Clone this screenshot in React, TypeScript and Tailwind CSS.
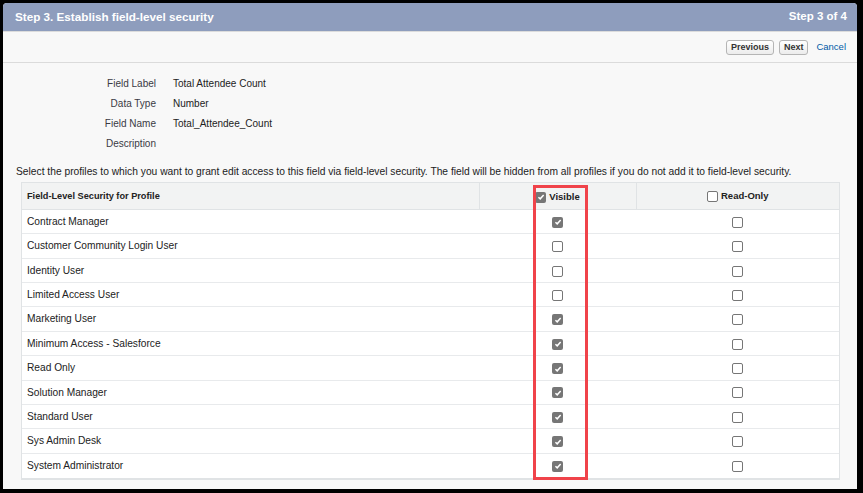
import React from 'react'

const font = { fontFamily: '"Liberation Sans", Arial, sans-serif' }

const profiles: { name: string; visible: boolean }[] = [
  { name: 'Contract Manager', visible: true },
  { name: 'Customer Community Login User', visible: false },
  { name: 'Identity User', visible: false },
  { name: 'Limited Access User', visible: false },
  { name: 'Marketing User', visible: true },
  { name: 'Minimum Access - Salesforce', visible: true },
  { name: 'Read Only', visible: true },
  { name: 'Solution Manager', visible: true },
  { name: 'Standard User', visible: true },
  { name: 'Sys Admin Desk', visible: true },
  { name: 'System Administrator', visible: true },
]

const details = [
  ['Field Label', 'Total Attendee Count'],
  ['Data Type', 'Number'],
  ['Field Name', 'Total_Attendee_Count'],
  ['Description', ''],
]

function Box({ checked }: { checked: boolean }) {
  if (checked) {
    return (
      <span className="inline-flex h-[11px] w-[11px] items-center justify-center rounded-[2px] bg-[#767676] align-middle">
        <svg viewBox="0 0 10 10" className="h-[8px] w-[8px]">
          <path d="M1.8 5.2 L4 7.3 L8.3 2.4" fill="none" stroke="white" strokeWidth="1.8" />
        </svg>
      </span>
    )
  }
  return <span className="inline-block h-[11px] w-[11px] rounded-[2px] border border-[#767676] bg-white align-middle" />
}

function Btn({ children }: { children: React.ReactNode }) {
  return (
    <button className="h-[15px] rounded-[3px] border border-[#b5b5b5] bg-gradient-to-b from-white to-[#ececec] px-[4px] text-[9px] font-bold leading-[13px] text-[#333]">
      {children}
    </button>
  )
}

export default function App() {
  return (
    <div style={font} className="h-[493px] w-[863px] bg-black pt-[3px] pl-[3px] pr-[6px] pb-[4px]">
      <div className="relative flex h-full flex-col rounded-t-[4px] bg-[#f8f8f8]">
        <div className="flex h-[29px] items-center justify-between rounded-t-[4px] border-b border-[#dcdcdc] bg-[#8e9dbd] pl-[12px] pr-[10px] font-bold text-white">
          <span className="text-[11.7px]">Step 3. Establish field-level security</span>
          <span className="text-[11.5px]">Step 3 of 4</span>
        </div>

        <div className="flex h-[31px] items-center justify-end gap-[5px] border-b border-[#dbdbdb] pr-[11px]">
          <Btn>Previous</Btn>
          <Btn>Next</Btn>
          <a className="ml-[3px] text-[9.5px] text-[#015ba7]">Cancel</a>
        </div>

        <div className="pt-[10px]">
          {details.map(([label, value]) => (
            <div key={label} className="flex h-[20px] items-center text-[10px]">
              <div className="w-[153px] text-right text-[#3a3a44]">{label}</div>
              <div className="pl-[17px] text-[#222]">{value}</div>
            </div>
          ))}
        </div>

        <p className="mt-[11px] pl-[13px] text-[10.25px] text-[#222]">
          Select the profiles to which you want to grant edit access to this field via field-level security. The field will be hidden from all profiles if you do not add it to field-level security.
        </p>

        <div className="ml-[18px] mr-[17px] mt-[3px] border border-b-2 border-[#e0e3e5] bg-white">
          <table className="w-full table-fixed border-collapse text-[10.2px] text-[#222]">
            <colgroup>
              <col className="w-[457px]" />
              <col className="w-[157px]" />
              <col />
            </colgroup>
            <thead>
              <tr className="h-[26px] bg-[#f2f3f3] font-bold">
                <th className="border-b border-[#e0e3e5] pl-[5px] pt-[1px] text-left text-[9.2px]">Field-Level Security for Profile</th>
                <th className="border-b border-l border-[#e0e3e5] pt-[3px] text-[9.5px]">
                  <span className="inline-flex items-center gap-[3px]">
                    <Box checked />
                    Visible
                  </span>
                </th>
                <th className="border-b border-l border-[#e0e3e5] pt-[3px] text-[9.5px]">
                  <span className="inline-flex items-center gap-[3px]">
                    <Box checked={false} />
                    Read-Only
                  </span>
                </th>
              </tr>
            </thead>
            <tbody>
              {profiles.map((p, i) => (
                <tr key={p.name} className={`h-[24.4px] ${i < profiles.length - 1 ? 'border-b border-[#e8eaec]' : ''}`}>
                  <td className="pl-[5px]">{p.name}</td>
                  <td className="text-center">
                    <Box checked={p.visible} />
                  </td>
                  <td className="text-center">
                    <Box checked={false} />
                  </td>
                </tr>
              ))}
            </tbody>
          </table>
        </div>

        <div className="pointer-events-none absolute left-[530px] top-[182px] h-[295px] w-[55px] border-[3px] border-[#f0434a]" />
      </div>
    </div>
  )
}
